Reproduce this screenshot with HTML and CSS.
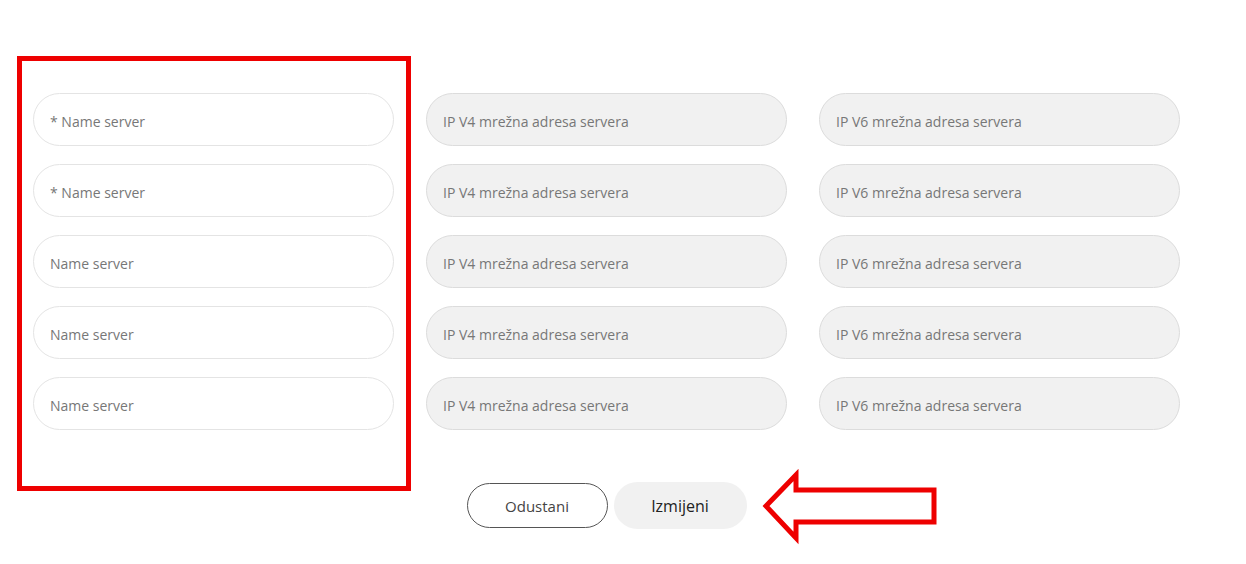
FILE: index.html
```html
<!DOCTYPE html>
<html lang="hr">
<head>
    <meta charset="UTF-8">
    <meta name="viewport" content="width=device-width, initial-scale=1.0">
    <title>Name serveri</title>
    <link rel="stylesheet" href="styles.css">
</head>
<body>
    <div class="page">
        <div class="ns-grid">
            <div class="field">* Name server</div>
            <div class="field ip">IP V4 mrežna adresa servera</div>
            <div class="field ip">IP V6 mrežna adresa servera</div>

            <div class="field">* Name server</div>
            <div class="field ip">IP V4 mrežna adresa servera</div>
            <div class="field ip">IP V6 mrežna adresa servera</div>

            <div class="field">Name server</div>
            <div class="field ip">IP V4 mrežna adresa servera</div>
            <div class="field ip">IP V6 mrežna adresa servera</div>

            <div class="field">Name server</div>
            <div class="field ip">IP V4 mrežna adresa servera</div>
            <div class="field ip">IP V6 mrežna adresa servera</div>

            <div class="field">Name server</div>
            <div class="field ip">IP V4 mrežna adresa servera</div>
            <div class="field ip">IP V6 mrežna adresa servera</div>
        </div>

        <div class="actions">
            <button class="btn btn-cancel">Odustani</button>
            <button class="btn btn-save">Izmijeni</button>
        </div>
    </div>

    <!-- annotation overlays -->
    <div class="mark-box"></div>
    <svg class="mark-arrow" width="186" height="80" viewBox="0 0 186 80">
        <polygon points="7,38 37,7 37,22 175,22 175,54 37,54 37,70" fill="none" stroke="#ee0000" stroke-width="5" stroke-linejoin="miter" stroke-miterlimit="3"/>
    </svg>
</body>
</html>
```

FILE: styles.css
```css
body {
    font-family: "Open Sans", "Noto Sans", sans-serif;
    background-color: #fff;
    margin: 0;
    padding: 0;
}

.page {
    width: 1147px;
    padding: 93px 0 0 33px;
}

.ns-grid {
    display: grid;
    grid-template-columns: repeat(3, 361px);
    column-gap: 32px;
    row-gap: 18px;
}

.field {
    box-sizing: border-box;
    height: 53px;
    border: 1px solid #e4e4e4;
    border-radius: 27px;
    background: #fff;
    color: #777;
    font-size: 14px;
    padding: 3px 16px 0;
    display: flex;
    align-items: center;
}

.field.ip {
    background: #f1f1f1;
    border-color: #dcdcdc;
}

.actions {
    display: flex;
    justify-content: center;
    align-items: center;
    gap: 6px;
    margin-top: 52px;
}

.btn {
    font-family: inherit;
    font-size: 15px;
    border-radius: 24px;
    cursor: pointer;
}

.btn-cancel {
    width: 141px;
    height: 45px;
    background: #fff;
    border: 1px solid #555;
    color: #444;
}

.btn-save {
    width: 133px;
    height: 47px;
    background: #f1f1f1;
    border: none;
    color: #222;
    font-size: 16px;
    font-weight: 500;
}

.mark-box {
    position: absolute;
    left: 17px;
    top: 56px;
    width: 384px;
    height: 425px;
    border: 5px solid #ee0000;
}

.mark-arrow {
    position: absolute;
    left: 759px;
    top: 468px;
}
```
